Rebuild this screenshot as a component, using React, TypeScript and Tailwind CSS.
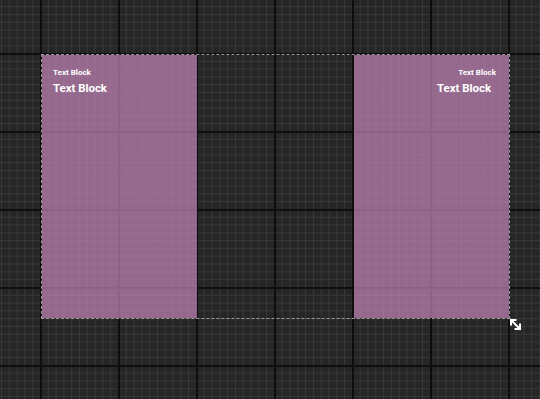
import React from "react";

function ResizeIcon() {
  return (
    <svg width="13" height="13" viewBox="0 0 13 13" fill="none" stroke="white" strokeWidth="2" strokeLinecap="square">
      <path d="M2 2 L11 11" />
      <path d="M2 6.5 L2 2 L6.5 2" />
      <path d="M11 6.5 L11 11 L6.5 11" />
    </svg>
  );
}

function Panel({ right }: { right?: boolean }) {
  return (
    <div
      className={`w-[155px] shrink-0 bg-[rgba(192,132,182,0.72)] flex flex-col pt-[13px] ${right ? "items-end pr-[14px]" : "items-start pl-[11px]"}`}
    >
      <div className={`text-[8px] leading-[10px] font-bold text-white ${right ? "mr-[-1px]" : ""}`}>Text Block</div>
      <div className={`text-[11.4px] leading-[14px] font-bold text-white mt-[3px] ${right ? "mr-[4px]" : ""}`}>Text Block</div>
    </div>
  );
}

export default function App() {
  return (
    <div
      className="w-[540px] h-[399px] overflow-hidden bg-[#262626] pl-[41px] pt-[54px] font-['Roboto',sans-serif]"
      style={{
        backgroundImage:
          "linear-gradient(to right, #0e0e0e 2px, transparent 2px), linear-gradient(to bottom, #0e0e0e 2px, transparent 2px), linear-gradient(to right, #393939 1px, transparent 1px), linear-gradient(to bottom, #393939 1px, transparent 1px)",
        backgroundSize: "78px 78px, 78px 78px, 7.8px 7.8px, 7.8px 7.8px",
        backgroundPosition: "40px 53px, 40px 53px, 40px 53px, 40px 53px",
      }}
    >
      <div className="relative w-[469px] h-[265px] border border-dashed border-[#9a9a9a] flex">
        <Panel />
        <div className="w-[157px] shrink-0" />
        <Panel right />
        <div className="absolute right-[-13px] bottom-[-13px]">
          <ResizeIcon />
        </div>
      </div>
    </div>
  );
}
